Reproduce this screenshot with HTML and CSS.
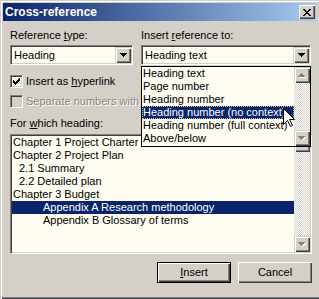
FILE: index.html
```html
<!DOCTYPE html>
<html>
<head>
<meta charset="utf-8">
<link rel="stylesheet" href="styles.css">
</head>
<body>
<div class="window">
  <div class="titlebar">
    <span class="title">Cross-reference</span>
    <span class="close"><svg width="8" height="7" viewBox="0 0 8 7" shape-rendering="crispEdges"><path d="M0 0h2v1h-2z M6 0h2v1h-2z M1 1h2v1h-2z M5 1h2v1h-2z M2 2h4v1h-4z M3 3h2v1h-2z M2 4h4v1h-4z M1 5h2v1h-2z M5 5h2v1h-2z M0 6h2v1h-2z M6 6h2v1h-2z" fill="#000"/></svg></span>
  </div>
  <div class="content">
    <div class="top">
      <div class="col">
        <div class="label">Reference <u>t</u>ype:</div>
        <div class="combo">
          <span class="combo-text">Heading</span>
          <span class="raised drop-btn"><svg width="7" height="4" viewBox="0 0 7 4" shape-rendering="crispEdges"><path d="M0 0h7v1h-1v1h-1v1h-1v1h-1v-1h-1v-1h-1v-1h-1z" fill="#000"/></svg></span>
        </div>
      </div>
      <div class="col">
        <div class="label">Insert <u>r</u>eference to:</div>
        <div class="combo">
          <span class="combo-text">Heading text</span>
          <span class="raised drop-btn"><svg width="7" height="4" viewBox="0 0 7 4" shape-rendering="crispEdges"><path d="M0 0h7v1h-1v1h-1v1h-1v1h-1v-1h-1v-1h-1v-1h-1z" fill="#000"/></svg></span>
        </div>
      </div>
    </div>
    <div class="check-row">
      <span class="checkbox"><svg width="7" height="7" viewBox="0 0 7 7" shape-rendering="crispEdges"><path d="M6 0h1v1h-1z M5 1h2v1h-2z M0 2h1v1h-1z M4 2h3v1h-3z M0 3h2v1h-2z M3 3h3v1h-3z M0 4h5v1h-5z M1 5h3v1h-3z M2 6h1v1h-1z" fill="#000"/></svg></span>
      <span class="check-label">Insert as <u>h</u>yperlink</span>
    </div>
    <div class="check-row disabled">
      <span class="checkbox"></span>
      <span class="check-label">Separate numbers with</span>
    </div>
    <div class="label heading-label">For <u>w</u>hich heading:</div>
    <div class="listbox">
      <div class="items">
        <div class="item">Chapter 1 Project Charter</div>
        <div class="item">Chapter 2 Project Plan</div>
        <div class="item lvl2">2.1 Summary</div>
        <div class="item lvl2">2.2 Detailed plan</div>
        <div class="item">Chapter 3 Budget</div>
        <div class="item lvl3 selected">Appendix A Research methodology</div>
        <div class="item lvl3">Appendix B Glossary of terms</div>
      </div>
      <div class="scrollbar">
        <div class="raised sb-btn"><svg width="8" height="5" viewBox="0 0 8 5" shape-rendering="crispEdges"><path transform="translate(1 1)" d="M3 0h1v1h1v1h1v1h1v1h-7v-1h1v-1h1v-1h1z" fill="#fff"/><path d="M3 0h1v1h1v1h1v1h1v1h-7v-1h1v-1h1v-1h1z" fill="#808080"/></svg></div>
        <div class="sb-track"></div>
        <div class="raised sb-btn"><svg width="8" height="5" viewBox="0 0 8 5" shape-rendering="crispEdges"><path transform="translate(1 1)" d="M0 0h7v1h-1v1h-1v1h-1v1h-1v-1h-1v-1h-1v-1h-1z" fill="#fff"/><path d="M0 0h7v1h-1v1h-1v1h-1v1h-1v-1h-1v-1h-1v-1h-1z" fill="#808080"/></svg></div>
      </div>
    </div>
    <div class="buttons">
      <div class="btn default"><span class="btn-inner"><u>I</u>nsert</span></div>
      <div class="btn"><span class="btn-inner">Cancel</span></div>
    </div>
  </div>

  <div class="dropdown">
    <div class="items">
      <div class="item">Heading text</div>
      <div class="item">Page number</div>
      <div class="item">Heading number</div>
      <div class="item selected focus">Heading number (no context)</div>
      <div class="item">Heading number (full context)</div>
      <div class="item">Above/below</div>
    </div>
    <div class="scrollbar">
      <div class="raised sb-btn"><svg width="8" height="5" viewBox="0 0 8 5" shape-rendering="crispEdges"><path transform="translate(1 1)" d="M3 0h1v1h1v1h1v1h1v1h-7v-1h1v-1h1v-1h1z" fill="#fff"/><path d="M3 0h1v1h1v1h1v1h1v1h-7v-1h1v-1h1v-1h1z" fill="#808080"/></svg></div>
      <div class="sb-track"></div>
      <div class="raised sb-btn"><svg width="8" height="5" viewBox="0 0 8 5" shape-rendering="crispEdges"><path transform="translate(1 1)" d="M0 0h7v1h-1v1h-1v1h-1v1h-1v-1h-1v-1h-1v-1h-1z" fill="#fff"/><path d="M0 0h7v1h-1v1h-1v1h-1v1h-1v-1h-1v-1h-1v-1h-1z" fill="#808080"/></svg></div>
    </div>
  </div>

  <svg class="cursor" width="13" height="20" viewBox="0 0 13 20"><path d="M0.5 0.5V16.5L4.5 12.5L7.5 18.5L9.5 17.5L6.5 11.5H11.5Z" fill="#fff" stroke="#000" stroke-width="1" stroke-linejoin="miter"/></svg>
</div>
</body>
</html>
```

FILE: styles.css
```css
html, body {
  margin: 0;
  padding: 0;
}

body {
  width: 319px;
  height: 299px;
  overflow: hidden;
  background: #d4d0c8;
  font-family: "Liberation Sans", Arial, sans-serif;
  font-size: 11px;
  color: #000;
}

.window {
  position: relative;
  width: 319px;
  height: 299px;
  box-sizing: border-box;
  padding: 3px 3px 0 3px;
  background: #d4d0c8;
  box-shadow: inset 1px 1px #d4d0c8, inset 2px 2px #ffffff, inset 0 -1px #404040, inset 0 -2px #808080;
  overflow: hidden;
}

.titlebar {
  height: 18px;
  display: flex;
  align-items: center;
  justify-content: space-between;
  padding: 0 1px 0 2px;
  background: linear-gradient(to right, #0a246a, #a6caf0);
}

.title {
  color: #fff;
  font-weight: bold;
  font-size: 12px;
  line-height: 18px;
  white-space: nowrap;
}

.close {
  width: 16px;
  height: 14px;
  display: flex;
  align-items: center;
  justify-content: center;
  background: #d4d0c8;
  box-shadow: inset 1px 1px #ffffff, inset -1px -1px #404040, inset -2px -2px #808080;
}

.close svg {
  display: block;
  margin-left: -1px;
}

.content {
  padding: 0 4px 0 7px;
}

.top {
  display: grid;
  grid-template-columns: 123px 170px;
  column-gap: 8px;
  margin-top: 8px;
}

.label {
  height: 13px;
  line-height: 13px;
  white-space: nowrap;
}

.combo {
  margin-top: 3px;
  height: 20px;
  box-sizing: border-box;
  border: 1px solid;
  border-color: #808080 #ffffff #ffffff #808080;
  box-shadow: inset 1px 1px #404040, inset -1px -1px #d4d0c8;
  background: #fffcf2;
  display: flex;
  align-items: stretch;
  padding: 1px;
}

.combo-text {
  flex: 1;
  padding-left: 2px;
  line-height: 16px;
  white-space: nowrap;
  overflow: hidden;
}

.raised {
  background: #d4d0c8;
  box-shadow: inset 1px 1px #d4d0c8, inset 2px 2px #ffffff, inset -1px -1px #404040, inset -2px -2px #808080;
  display: flex;
  align-items: center;
  justify-content: center;
}

.drop-btn {
  width: 16px;
  height: 16px;
}

.check-row {
  margin-top: 10px;
  height: 13px;
  display: flex;
  align-items: center;
  gap: 3px;
  white-space: nowrap;
}

.check-row + .check-row {
  margin-top: 7px;
}

.checkbox {
  width: 13px;
  height: 13px;
  box-sizing: border-box;
  border: 1px solid;
  border-color: #808080 #ffffff #ffffff #808080;
  box-shadow: inset 1px 1px #404040, inset -1px -1px #d4d0c8;
  background: #fffcf2;
  display: flex;
  align-items: center;
  justify-content: center;
  flex: none;
}

.check-label {
  line-height: 13px;
}

.disabled .checkbox {
  background: #d4d0c8;
}

.disabled .check-label {
  color: #8a8780;
  text-shadow: 1px 1px #ffffff;
}

.heading-label {
  margin-top: 9px;
}

.listbox {
  margin-top: 4px;
  height: 120px;
  box-sizing: border-box;
  border: 1px solid;
  border-color: #808080 #ffffff #ffffff #808080;
  box-shadow: inset 1px 1px #404040, inset -1px -1px #d4d0c8;
  background: #fffcf2;
  padding: 1px;
  display: flex;
}

.items {
  flex: 1;
  min-width: 0;
}

.item {
  height: 13px;
  line-height: 13px;
  padding-left: 1px;
  white-space: nowrap;
  overflow: hidden;
}

.item.lvl2 {
  padding-left: 7px;
}

.item.lvl3 {
  padding-left: 31px;
}

.item.selected {
  background: #0a246a;
  color: #ffffff;
}

.item.focus {
  box-sizing: border-box;
  border: 1px dotted #c8c090;
  padding-left: 0;
  line-height: 11px;
}

.scrollbar {
  width: 16px;
  display: flex;
  flex-direction: column;
  flex: none;
}

.sb-btn {
  height: 16px;
  flex: none;
}

.sb-track {
  flex: 1;
  background-color: #ffffff;
  background-image: repeating-conic-gradient(#d4d0c8 0 25%, #ffffff 0 50%);
  background-size: 2px 2px;
}

.buttons {
  margin-top: 8px;
  display: flex;
  justify-content: flex-end;
  gap: 7px;
}

.btn {
  width: 74px;
  height: 21px;
  box-sizing: border-box;
  background: #d4d0c8;
  box-shadow: inset 1px 1px #ffffff, inset -1px -1px #404040, inset -2px -2px #808080;
  display: flex;
  align-items: center;
  justify-content: center;
}

.btn.default {
  border: 1px solid #000;
  box-shadow: inset 1px 1px #ffffff, inset -1px -1px #404040, inset -2px -2px #808080;
}

.btn-inner {
  line-height: 13px;
}

.dropdown {
  position: absolute;
  left: 141px;
  top: 66px;
  width: 170px;
  height: 81px;
  box-sizing: border-box;
  border: 1px solid #000;
  background: #fffcf2;
  display: flex;
}

.dropdown .item {
  padding-left: 1px;
}

.dropdown .item.focus {
  padding-left: 0;
}

.cursor {
  position: absolute;
  left: 283px;
  top: 108px;
}
```
